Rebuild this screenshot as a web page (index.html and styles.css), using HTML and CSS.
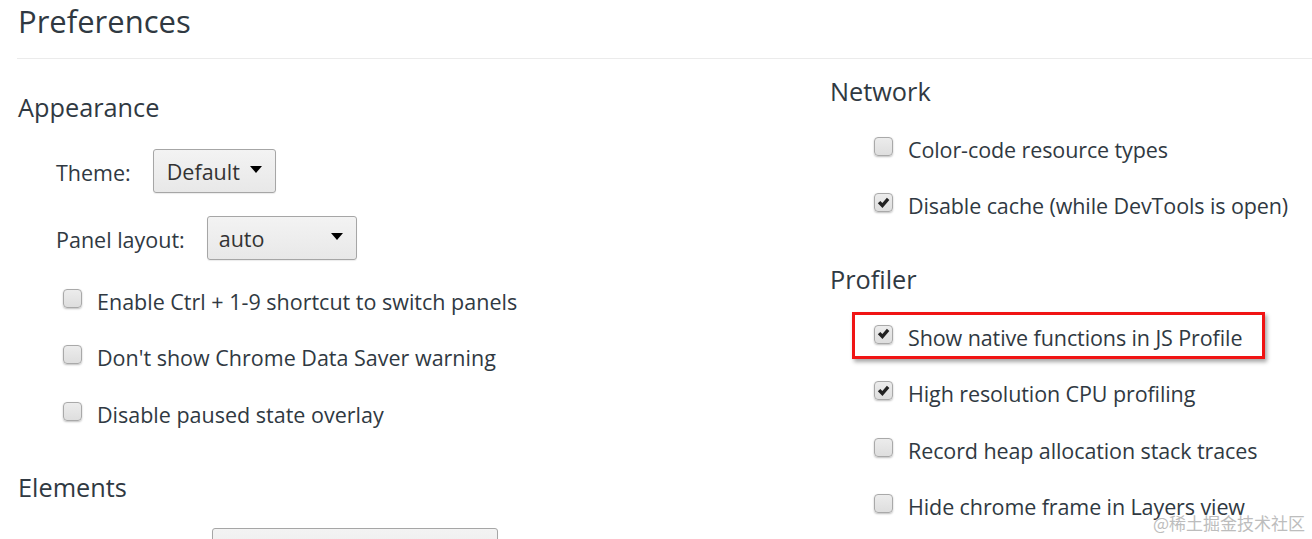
FILE: index.html
```html
<!DOCTYPE html>
<html lang="en">
<head>
<meta charset="utf-8">
<title>Preferences</title>
<link rel="stylesheet" href="styles.css">
</head>
<body>
<div class="page">
  <header class="header">
    <h1 class="title">Preferences</h1>
  </header>
  <div class="columns">
    <div class="col col-left">
      <section class="section">
        <h2 class="section-title">Appearance</h2>
        <div class="field field-theme">
          <span class="field-label">Theme:</span>
          <div class="select select-theme"><span class="select-text">Default</span><span class="arrow"></span></div>
        </div>
        <div class="field field-panel">
          <span class="field-label">Panel layout:</span>
          <div class="select select-panel"><span class="select-text">auto</span><span class="arrow"></span></div>
        </div>
        <div class="checks">
          <label class="check-row"><span class="box"></span><span class="check-text">Enable Ctrl + 1-9 shortcut to switch panels</span></label>
          <label class="check-row"><span class="box"></span><span class="check-text">Don't show Chrome Data Saver warning</span></label>
          <label class="check-row"><span class="box"></span><span class="check-text">Disable paused state overlay</span></label>
        </div>
      </section>
      <section class="section section-elements">
        <h2 class="section-title">Elements</h2>
        <div class="field field-color">
          <span class="field-spacer"></span>
          <div class="select select-color"></div>
        </div>
      </section>
    </div>
    <div class="col col-right">
      <section class="section">
        <h2 class="section-title">Network</h2>
        <div class="checks">
          <label class="check-row"><span class="box"></span><span class="check-text">Color-code resource types</span></label>
          <label class="check-row"><span class="box checked"><svg viewBox="0 0 18 18" width="18" height="18"><path d="M3 9.2 L5.6 6.8 L7.8 9.1 L12.6 3.4 L15.2 5.8 L7.9 14.2 Z" fill="#222222"/></svg></span><span class="check-text">Disable cache (while DevTools is open)</span></label>
        </div>
      </section>
      <section class="section section-profiler">
        <h2 class="section-title">Profiler</h2>
        <div class="checks">
          <div class="check-row check-row-hl">
            <label class="highlight"><span class="box checked"><svg viewBox="0 0 18 18" width="18" height="18"><path d="M3 9.2 L5.6 6.8 L7.8 9.1 L12.6 3.4 L15.2 5.8 L7.9 14.2 Z" fill="#222222"/></svg></span><span class="check-text">Show native functions in JS Profile</span></label>
          </div>
          <label class="check-row"><span class="box checked"><svg viewBox="0 0 18 18" width="18" height="18"><path d="M3 9.2 L5.6 6.8 L7.8 9.1 L12.6 3.4 L15.2 5.8 L7.9 14.2 Z" fill="#222222"/></svg></span><span class="check-text">High resolution CPU profiling</span></label>
          <label class="check-row"><span class="box"></span><span class="check-text">Record heap allocation stack traces</span></label>
          <label class="check-row"><span class="box"></span><span class="check-text">Hide chrome frame in Layers view</span></label>
        </div>
      </section>
    </div>
  </div>
  <div class="watermark">@稀土掘金技术社区</div>
</div>
</body>
</html>
```

FILE: styles.css
```css
html, body {
  margin: 0;
  padding: 0;
  background: #ffffff;
  overflow: hidden;
}

body {
  font-family: "Open Sans", "Noto Sans", "Liberation Sans", sans-serif;
  color: #303942;
}

.page {
  position: relative;
  width: 1312px;
  height: 539px;
  overflow: hidden;
}

.header {
  margin-left: 17px;
  height: 58px;
  border-bottom: 1px solid #ebebeb;
}

.title {
  margin: 0;
  padding-left: 1px;
  font-size: 31px;
  font-weight: 400;
  line-height: 42px;
  color: #303942;
}

.columns {
  display: grid;
  grid-template-columns: 812px 1fr;
  padding-left: 18px;
}

.col-left {
  padding-top: 32px;
}

.col-right {
  padding-top: 16px;
}

.section-title {
  margin: 0;
  font-size: 25.3px;
  font-weight: 400;
  line-height: 32px;
  color: #303942;
}

.field {
  display: flex;
  align-items: center;
  height: 44px;
  padding-left: 38px;
  font-size: 21.5px;
}

.field-theme {
  margin-top: 26px;
}

.field-panel {
  margin-top: 23px;
}

.field-label {
  margin-right: 22px;
  padding-top: 2px;
}

.field-spacer {
  width: 156px;
}

.select {
  box-sizing: border-box;
  display: flex;
  align-items: center;
  justify-content: space-between;
  height: 44px;
  border: 1px solid #a6a6a6;
  border-radius: 3px;
  background: linear-gradient(#f3f3f3, #e8e8e8);
  box-shadow: 0 1px 1px rgba(0, 0, 0, 0.08);
  color: #333333;
  font-size: 21.5px;
  padding: 0 13px 0 13px;
}

.select-theme {
  width: 123px;
}

.select-panel {
  width: 150px;
  padding-left: 11px;
}

.select-color {
  width: 286px;
}

.select-text {
  line-height: 1;
  padding-top: 2px;
}

.arrow {
  width: 0;
  height: 0;
  border-left: 6.5px solid transparent;
  border-right: 6.5px solid transparent;
  border-top: 7px solid #000000;
  margin-top: -3px;
}

.checks {
  display: flex;
  flex-direction: column;
}

.col-left .checks {
  margin-top: 11px;
}

.col-right .checks {
  margin-top: 12px;
}

.check-row {
  display: flex;
  align-items: center;
  height: 56.5px;
  padding-left: 45px;
  font-size: 21.5px;
}

.col-right .check-row {
  padding-left: 44px;
}

.box {
  box-sizing: border-box;
  flex: none;
  width: 19px;
  height: 19px;
  margin-right: 15px;
  margin-top: -2px;
  border: 1px solid #a9a9a9;
  border-radius: 4px;
  background: linear-gradient(#ececec, #dedede);
  box-shadow: 0 1px 2px rgba(0, 0, 0, 0.25);
  display: flex;
  align-items: center;
  justify-content: center;
}

.box svg {
  display: block;
}

.check-text {
  white-space: nowrap;
  padding-top: 4px;
}

.col-right .check-text {
  letter-spacing: -0.1px;
}

.section-elements {
  margin-top: 30px;
}

.field-color {
  margin-top: 25px;
}

.section-profiler {
  margin-top: 31px;
}

.col-right .check-row-hl {
  padding-left: 22px;
}

.highlight {
  display: flex;
  align-items: center;
  box-sizing: border-box;
  height: 47px;
  padding: 0 20px 0 19px;
  border: 3px solid #f01414;
  box-shadow: 2px 3px 4px rgba(0, 0, 0, 0.35);
}

.watermark {
  position: absolute;
  right: 7px;
  bottom: 6px;
  font-family: "Noto Sans CJK SC", sans-serif;
  font-size: 17px;
  line-height: 20px;
  color: #bdbdbd;
  text-shadow: 0 0 1px #ffffff, 0 0 1px #ffffff;
}
```
